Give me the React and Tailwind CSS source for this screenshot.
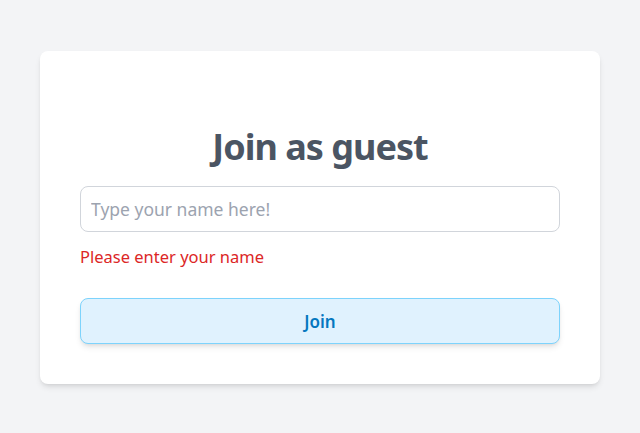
import React, { useState } from "react";

const App = () => {
  const [name, setName] = useState("");

  return (
    <div
      className="flex items-center justify-center w-full min-h-screen bg-[#f3f4f6]"
      style={{ fontFamily: '"Noto Sans", "Open Sans", sans-serif' }}
    >
      {/* ===== Guest card ===== */}
      <div className="w-[560px] h-[333px] mt-[2px] bg-white rounded-lg shadow-md px-10 pt-[76px] pb-10 flex flex-col">
        <h1 className="text-4xl leading-10 font-bold text-[#4b5563] text-center mb-[19px] tracking-[-1px]">
          Join as guest
        </h1>

        <input
          value={name}
          onChange={(e) => setName(e.target.value)}
          placeholder="Type your name here!"
          className="w-full h-[46px] shrink-0 rounded-lg border border-[#d1d5db] px-[10px] text-[17.5px] text-gray-700 placeholder:text-[#9ca3af] outline-none"
        />

        <p className="mt-[11px] text-[16.5px] leading-7 text-[#dc2626]">
          Please enter your name
        </p>

        <button className="mt-[27px] w-full h-[46px] shrink-0 rounded-lg border border-[#7dd3fc] bg-[#e0f2fe] text-[#0477bf] text-[17px] font-semibold shadow-md pt-[2px]">
          Join
        </button>
      </div>
    </div>
  );
};

export default App;
